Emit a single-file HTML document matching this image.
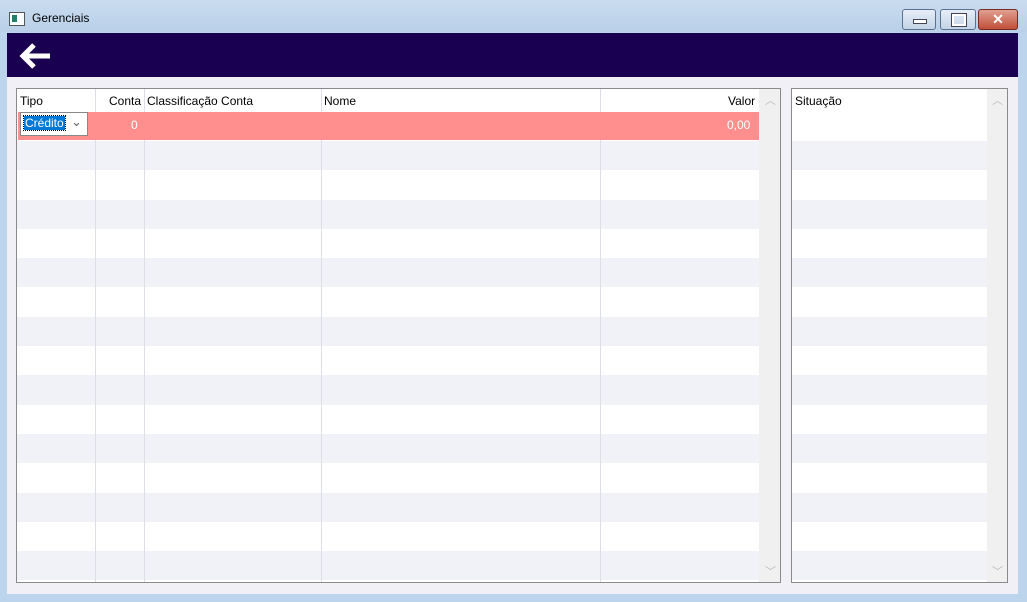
<!DOCTYPE html><html><head><style>
body{margin:0;width:1027px;height:602px;overflow:hidden;font-family:"Liberation Sans",sans-serif;font-size:12px;background:#bcd4ec;position:relative}
.a{position:absolute}
.btn{position:absolute;top:9px;height:19px;border:1px solid #5a7190;border-radius:3px;background:linear-gradient(#e6eef8,#c3d3e6)}
</style></head><body>
<div class="a" style="left:0;top:0;width:1027px;height:32px;background:linear-gradient(#c9dcf0,#b9d0e8)"></div>
<div class="a" style="left:9px;top:12px;width:14px;height:12px;border:1px solid #555;background:#fff"><div class="a" style="left:2px;top:2px;width:5px;height:7px;background:#2a7a6a"></div></div>
<div class="a" style="left:32px;top:11px;font-size:12px;color:#000">Gerenciais</div>
<div class="btn" style="left:902px;width:32px"><div class="a" style="left:10px;top:9px;width:12px;height:3px;background:#fff;border:1px solid #445"></div></div>
<div class="btn" style="left:940px;width:34px"><div class="a" style="left:11px;top:4px;width:10px;height:8px;border:2px solid #fff;outline:1px solid #445"></div></div>
<div class="btn" style="left:978px;width:38px;background:linear-gradient(#e0a090,#c0503a);border-color:#7a2a20;color:#fff;text-align:center;font-weight:bold;font-size:14px;line-height:19px">✕</div>
<div class="a" style="left:7px;top:33px;width:1011px;height:561px;background:#f0f0f6"></div>
<div class="a" style="left:7px;top:33px;width:1011px;height:44px;background:#1a0050"></div>
<svg class="a" style="left:18px;top:42px" width="34" height="28" viewBox="0 0 34 28"><path d="M16 3 L5 14 L16 25 M5 14 H32" stroke="#fff" stroke-width="5" fill="none"/></svg>
<div class="a" style="left:16px;top:88px;width:763px;height:493px;border:1px solid #8a8a8a;background:#fff;overflow:hidden">
<div id="rows"></div>
<div class="a" style="left:78px;top:0;width:1px;height:493px;background:#dedee6"></div>
<div class="a" style="left:127px;top:0;width:1px;height:493px;background:#dedee6"></div>
<div class="a" style="left:304px;top:0;width:1px;height:493px;background:#dedee6"></div>
<div class="a" style="left:583px;top:0;width:1px;height:493px;background:#dedee6"></div>
<div class="a" style="left:1px;top:23px;width:741px;height:28px;background:#ff8e8e"></div>
<div class="a" style="left:742px;top:0;width:21px;height:493px;background:#f0f0f0"></div>
<div class="a" style="left:748px;top:3px;color:#bbb;font-size:11px">︿</div>
<div class="a" style="left:748px;top:474px;color:#bbb;font-size:11px">﹀</div>
<div class="a" style="left:3px;top:5px">Tipo</div>
<div class="a" style="left:92px;top:5px">Conta</div>
<div class="a" style="left:130px;top:5px">Classificação Conta</div>
<div class="a" style="left:307px;top:5px">Nome</div>
<div class="a" style="left:711px;top:5px">Valor</div>
<div class="a" style="left:3px;top:23px;width:66px;height:22px;border:1px solid #888;background:#fff"><span class="a" style="left:3px;top:3px;background:#0078d7;color:#fff;outline:1px dotted #000;padding:0 1px">Crédito</span><span class="a" style="left:50px;top:1px;color:#666;font-size:13px">⌄</span></div>
<div class="a" style="left:114px;top:29px;color:#fff">0</div>
<div class="a" style="left:710px;top:29px;color:#fff">0,00</div>
</div>
<div class="a" style="left:791px;top:88px;width:215px;height:493px;border:1px solid #8a8a8a;background:#fff;overflow:hidden">
<div id="rows2"></div>
<div class="a" style="left:195px;top:0;width:20px;height:493px;background:#f0f0f0"></div>
<div class="a" style="left:200px;top:3px;color:#bbb;font-size:11px">︿</div>
<div class="a" style="left:200px;top:474px;color:#bbb;font-size:11px">﹀</div>
<div class="a" style="left:3px;top:5px">Situação</div>
</div>
<script>
function f(id,w){var h='';for(var i=0;i<16;i+=2){var t=52+i*29.3;h+='<div class="a" style="left:0;top:'+t+'px;width:'+w+'px;height:29.3px;background:#f1f2f8"></div>';}document.getElementById(id).innerHTML=h;}
f('rows',742);f('rows2',195);
</script>
</body></html>
